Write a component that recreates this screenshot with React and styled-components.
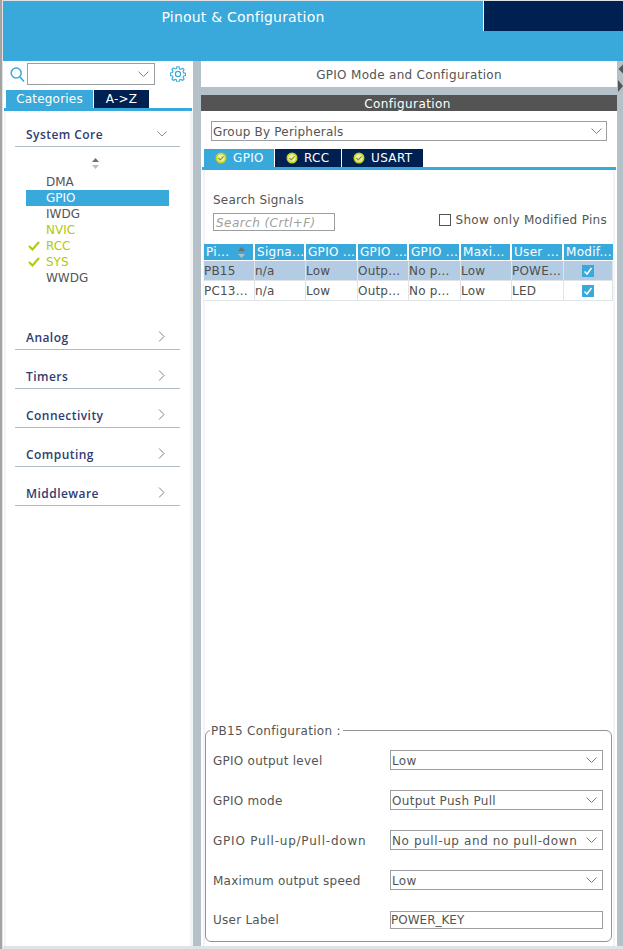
import React from "react";
import styled, { createGlobalStyle } from "styled-components";

const Global = createGlobalStyle`
  html, body { margin: 0; padding: 0; background: #fff; }
  body { font-family: "DejaVu Sans", sans-serif; font-size: 12px; color: #545554; }
  * { box-sizing: border-box; }
`;

const Frame = styled.div`
  width: 623px; height: 949px; overflow: hidden; background: #dfe3e6;
  padding: 1px 0 3px 1px; border-left: 2px solid #a3a3a3; display: flex; flex-direction: column;
`;
const Header = styled.header`
  height: 60px; flex: none; background: #39a9dc; display: flex; align-items: flex-start;
`;
const HeaderTab = styled.div`
  flex: 1; height: 31px; color: #fff; font-size: 14px; line-height: 32px; text-align: center; letter-spacing: 0.2px;
`;
const HeaderDark = styled.div`
  width: 140px; height: 30px; background: #002052; border-left: 1px solid #fff;
`;
const Body = styled.div`flex: 1; display: flex; min-height: 0; background: #b5c1c9;`;
const Left = styled.aside`
  width: 190px; flex: none; background: #fff; display: flex; flex-direction: column;
`;
const SearchRow = styled.div`
  height: 29px; padding: 2px 0 0 7px; display: flex; align-items: flex-start; flex: none;
`;
const ComboSmall = styled.div`
  width: 128px; height: 22px; margin-left: 2px; border: 1px solid #9c9fa2; background: #fff;
  display: flex; align-items: center; justify-content: flex-end; padding-right: 5px;
`;
const GearBox = styled.div`margin-left: 15px; margin-top: 3px; display: flex;`;
const TabsSmall = styled.div`display: flex; padding-left: 3px; gap: 1px; height: 18px; flex: none;`;
const SideTab = styled.div`
  height: 18px; width: ${p => p.$w}px; background: ${p => p.$active ? "#39a9dc" : "#002052"};
  color: #fff; font-size: 12px; line-height: 18px; text-align: center;
  letter-spacing: 0.2px; white-space: nowrap;
`;
const TabRule = styled.div`height: 3px; margin-left: 1px; width: 188px; background: #39a9dc; flex: none;`;
const LeftInner = styled.div`
  flex: 1; margin-left: 1px; border-left: 2px solid #f2f4f5; border-right: 3px solid #f2f4f5; padding: 0 0 0 9px;
`;
const Category = styled.div`
  width: 165px; height: ${p => p.$h}px; margin-top: ${p => p.$top}px; border-bottom: 1px solid #aebbc4;
  display: flex; align-items: flex-end; justify-content: space-between;
  padding: 0 ${p => p.$pr}px 3px 11px; color: #2f3d72; font-size: 12px; font-weight: 600;
  font-family: "Open Sans", "DejaVu Sans", sans-serif; letter-spacing: 0.45px;
`;
const Sort = styled.div`height: 14px; margin: 10px 0 0 76px; display: flex;`;
const Items = styled.ul`list-style: none; margin: 3px 0 0 11px; padding: 0; width: 143px;`;
const Item = styled.li`
  height: 16px; line-height: 16px; font-size: 12px; padding-left: 20px; position: relative;
  background: ${p => p.$sel ? "#39a9dc" : "transparent"};
  color: ${p => p.$sel ? "#fff" : p.$lime ? "#b4c70b" : "#545554"};
`;
const CheckMark = styled.svg`position: absolute; left: 2px; top: 3px;`;
const Gutter = styled.div`width: 8px; flex: none;`;
const Right = styled.main`width: 416px; flex: none; display: flex; flex-direction: column;`;
const ModeTitle = styled.div`
  height: 26px; flex: none; background: #fff; text-align: center; font-size: 12px; line-height: 28px; letter-spacing: 0.3px;
`;
const ConfigBar = styled.div`
  height: 16px; margin-top: 8px; flex: none; background: #535453; color: #fff; text-align: center; padding-right: 3px;
  font-size: 12px; line-height: 18px; letter-spacing: 0.4px;
`;
const ConfigBody = styled.div`flex: 1; background: #fff; display: flex; flex-direction: column; min-height: 0;`;
const Select = styled.div`
  width: ${p => p.$w}px; height: 20px; border: 1px solid #9c9fa2; background: #fff; margin-left: ${p => p.$ml || 0}px;
  display: flex; align-items: center; justify-content: space-between; padding: 1px ${p => p.$pr}px 0 1px; font-size: 12px;
  letter-spacing: ${p => p.$ls || 0.3}px; white-space: nowrap; flex: none;
`;
const GroupWrap = styled.div`padding-top: 10px; flex: none;`;
const PeriphTabs = styled.div`display: flex; gap: 1px; margin: 8px 0 0 3px; height: 18px;`;
const PeriphTab = styled.div`
  height: 18px; width: ${p => p.$w}px; background: ${p => p.$active ? "#39a9dc" : "#002052"}; color: #fff; font-size: 12px;
  display: flex; align-items: center; padding-left: 11px; gap: 6px; letter-spacing: 0.35px;
`;
const PeriphRule = styled.div`height: 3px; background: #39a9dc; margin: 0 1px 0 1px; flex: none;`;
const PeriphBody = styled.div`
  flex: 1; margin: 0 2px 0 2px; border-left: 2px solid #f2f4f5; border-right: 2px solid #f2f4f5; display: flex; flex-direction: column; min-height: 0;
`;
const SearchArea = styled.div`height: 74px; flex: none; padding: 23px 0 0 8px; display: flex; justify-content: space-between;`;
const SearchLeft = styled.div`display: flex; flex-direction: column;`;
const SearchLabel = styled.div`font-size: 12px; line-height: 14px; letter-spacing: 0.2px;`;
const SearchInput = styled.div`
  margin-top: 6px; width: 122px; height: 18px; border: 1px solid #9c9fa2; color: #a0a0a0; font-style: italic; font-size: 12px; line-height: 18px; padding-left: 2px; letter-spacing: 0.45px; white-space: nowrap;
`;
const ModifiedRow = styled.label`
  display: flex; align-items: center; gap: 5px; margin: 17px 6px 0 0; height: 20px; font-size: 12px; letter-spacing: 0.3px;
`;
const Box = styled.span`width: 12px; height: 12px; border: 1px solid #545554; background: #fff; display: block;`;
const Grid = styled.div`
  display: grid; grid-template-columns: 51px 51px 52px 51px 52px 51px 52px 49px; margin-left: -1px; width: 409px;
`;
const Th = styled.div`
  height: 16px; background: #39a9dc; color: #fff; font-size: 12px; line-height: 16px; padding-left: 2px; margin-right: ${p => p.$last ? 0 : 2}px;
  white-space: nowrap; overflow: hidden; display: flex; justify-content: space-between; align-items: center; padding-right: ${p => p.$pr || 0}px;
  letter-spacing: 0.3px;
`;
const Td = styled.div`
  height: 20px; margin-top: ${p => p.$first ? 1 : 0}px; background: ${p => p.$sel ? "#b4cce3" : "#fff"};
  border-right: 1px solid #dfe4e8; border-bottom: 1px solid #dfe4e8; font-size: 12px; line-height: 18px; padding-left: 0;
  white-space: nowrap; overflow: hidden; color: #4e4f4e; display: flex; align-items: center; letter-spacing: 0.2px;
  justify-content: ${p => p.$center ? "center" : "flex-start"};
`;
const Tick = styled.span`width: 12px; height: 12px; background: #39a9dc; display: flex; align-items: center; justify-content: center;`;
const Spacer = styled.div`flex: 1;`;
const Fieldset = styled.fieldset`
  margin: 0 1px 4px 0; padding: 3px 8px 0 7px; height: 219px; border: 1px solid #8f9499; border-radius: 6px; min-width: 0;
  display: flex; flex-direction: column; flex: none;
`;
const Legend = styled.legend`padding: 1px 2px 0 1px; height: 14px; margin-left: -3px; font-size: 12px; line-height: 14px; letter-spacing: 0.3px;`;
const FormRow = styled.div`
  height: 40px; display: flex; align-items: center; justify-content: space-between; flex: none; font-size: 12px;
`;
const FormLabel = styled.span`letter-spacing: ${p => p.$ls || 0.25}px; white-space: nowrap; padding-top: ${p => p.$pt ?? 1}px;`;
const TextValue = styled.div`
  width: 213px; height: 18px; border: 1px solid #9c9fa2; font-size: 12px; line-height: 16px; padding-left: 0; color: #545554;
`;
const RightStrip = styled.div`flex: 1; position: relative; background: #b5c1c9;`;
const Handle = styled.svg`position: absolute; right: 0; top: 0;`;

const Chevron = ({ size = 11, color = "#7b8288", up = 0 }) => (
  <svg width={size} height={size * 0.6} viewBox="0 0 10 6" fill="none" style={{ marginBottom: up, flex: "none" }}>
    <path d="M.5.5 5 5 9.5.5" stroke={color} strokeWidth=".9" />
  </svg>
);
const ChevronRight = () => (
  <svg width="7" height="11" viewBox="0 0 7 11" fill="none" style={{ marginBottom: 4, flex: "none" }}>
    <path d="M1 .5 6 5.5 1 10.5" stroke="#7b8288" strokeWidth="1" />
  </svg>
);
const OkBadge = () => (
  <svg width="12" height="12" viewBox="0 0 12 12" style={{ flex: "none" }}>
    <circle cx="6" cy="6" r="5.5" fill="#c4d21c" />
    <circle cx="6" cy="6" r="3.8" fill="#e9efb0" />
    <path d="M3.4 6 5.2 7.8 8.6 4.4" fill="none" stroke="#8f9c10" strokeWidth="1.2" />
  </svg>
);
const TickIcon = () => (
  <svg width="10" height="10" viewBox="0 0 10 10"><path d="M1.5 5.5 4 8 8.5 2" fill="none" stroke="#fff" strokeWidth="1.5" /></svg>
);
const SortIcon = () => (
  <svg width="9" height="13" viewBox="0 0 9 13" style={{ flex: "none" }}>
    <path d="M4.5 1 8 5H1z" fill="#6a7074" /><path d="M4.5 12 8 8H1z" fill="#b9bec2" />
  </svg>
);
const ListCheck = () => (
  <CheckMark width="12" height="10" viewBox="0 0 12 10">
    <path d="M1 5 4.5 8.5 11 1" fill="none" stroke="#b4c70b" strokeWidth="2" />
  </CheckMark>
);

const rows = [
  ["PB15", "n/a", "Low", "Outp...", "No p...", "Low", "POWE..."],
  ["PC13...", "n/a", "Low", "Outp...", "No p...", "Low", "LED"],
];
const heads = ["Signa...", "GPIO ...", "GPIO ...", "GPIO ...", "Maxi...", "User ...", "Modif..."];
const fields = [
  ["GPIO output level", "Low"],
  ["GPIO mode", "Output Push Pull"],
  ["GPIO Pull-up/Pull-down", "No pull-up and no pull-down", 0.78, 0.6],
  ["Maximum output speed", "Low"],
];

export default function App() {
  return (
    <Frame>
      <Global />
      <Header>
        <HeaderTab>Pinout &amp; Configuration</HeaderTab>
        <HeaderDark />
      </Header>
      <Body>
        <Left>
          <SearchRow>
            <svg width="15" height="17" viewBox="0 0 15 17" fill="none" style={{ marginTop: 3, flex: "none" }}>
              <circle cx="6.2" cy="7" r="5" stroke="#39a9dc" strokeWidth="1.5" />
              <path d="M10 11 14 15.5" stroke="#39a9dc" strokeWidth="1.6" />
            </svg>
            <ComboSmall><Chevron /></ComboSmall>
            <GearBox>
              <svg width="16" height="16" viewBox="0 0 16 16" fill="none" stroke="#39a9dc">
                <circle cx="8" cy="8" r="2.6" strokeWidth="1.2" />
                <path strokeWidth="1.1" d="M6.9.8h2.2l.4 2 1.4.6 1.7-1.1 1.5 1.5-1.1 1.7.6 1.4 2 .4v2.2l-2 .4-.6 1.4 1.1 1.7-1.5 1.5-1.7-1.1-1.4.6-.4 2H6.9l-.4-2-1.4-.6-1.7 1.1-1.5-1.5 1.1-1.7-.6-1.4-2-.4V6.9l2-.4.6-1.4-1.1-1.7 1.5-1.5 1.7 1.1 1.4-.6z" />
              </svg>
            </GearBox>
          </SearchRow>
          <TabsSmall>
            <SideTab $active $w={87}>Categories</SideTab>
            <SideTab $w={55}>A-&gt;Z</SideTab>
          </TabsSmall>
          <TabRule />
          <LeftInner>
            <Category $h={36} $top={0} $pr={13}>System Core <Chevron size={10} up={6} /></Category>
            <Sort><SortIcon /></Sort>
            <Items>
              <Item>DMA</Item>
              <Item $sel>GPIO</Item>
              <Item>IWDG</Item>
              <Item $lime>NVIC</Item>
              <Item $lime><ListCheck />RCC</Item>
              <Item $lime><ListCheck />SYS</Item>
              <Item>WWDG</Item>
            </Items>
            <Category $h={39} $top={25} $pr={15}>Analog <ChevronRight /></Category>
            <Category $h={39} $top={0} $pr={15}>Timers <ChevronRight /></Category>
            <Category $h={39} $top={0} $pr={15}>Connectivity <ChevronRight /></Category>
            <Category $h={39} $top={0} $pr={15}>Computing <ChevronRight /></Category>
            <Category $h={39} $top={0} $pr={15}>Middleware <ChevronRight /></Category>
          </LeftInner>
        </Left>
        <Gutter />
        <Right>
          <ModeTitle>GPIO Mode and Configuration</ModeTitle>
          <ConfigBar>Configuration</ConfigBar>
          <ConfigBody>
            <GroupWrap>
              <Select $w={396} $ml={10} $pr={4} $ls={0.2}>Group By Peripherals <Chevron /></Select>
              <PeriphTabs>
                <PeriphTab $active $w={70}><OkBadge />GPIO</PeriphTab>
                <PeriphTab $w={66}><OkBadge />RCC</PeriphTab>
                <PeriphTab $w={81}><OkBadge />USART</PeriphTab>
              </PeriphTabs>
              <PeriphRule />
            </GroupWrap>
            <PeriphBody>
              <SearchArea>
                <SearchLeft>
                  <SearchLabel>Search Signals</SearchLabel>
                  <SearchInput>Search (Crtl+F)</SearchInput>
                </SearchLeft>
                <ModifiedRow><Box />Show only Modified Pins</ModifiedRow>
              </SearchArea>
              <Grid>
                <Th $pr={7}>Pi... <SortIcon /></Th>
                {heads.map((h, i) => <Th key={i} $last={i === heads.length - 1}>{h}</Th>)}
                {rows.map((r, ri) => (
                  <React.Fragment key={ri}>
                    {r.map((c, ci) => <Td key={ci} $first={ri === 0} $sel={ri === 0}>{c}</Td>)}
                    <Td $first={ri === 0} $sel={ri === 0} $center><Tick><TickIcon /></Tick></Td>
                  </React.Fragment>
                ))}
              </Grid>
              <Spacer />
              <Fieldset>
                <Legend>PB15 Configuration :</Legend>
                {fields.map(([l, v, labelLs, valueLs]) => (
                  <FormRow key={l}>
                    <FormLabel $ls={labelLs}>{l}</FormLabel>
                    <Select $w={213} $pr={5} $ls={valueLs}>{v} <Chevron /></Select>
                  </FormRow>
                ))}
                <FormRow><FormLabel $pt={0}>User Label</FormLabel><TextValue>POWER_KEY</TextValue></FormRow>
              </Fieldset>
            </PeriphBody>
          </ConfigBody>
        </Right>
        <RightStrip>
          <Handle width="6" height="32" viewBox="0 0 6 32">
            <path d="M6 3.5 1.5 8 6 12.5z" fill="#545554" /><path d="M1 19 6 25 1 31z" fill="#545554" />
          </Handle>
        </RightStrip>
      </Body>
    </Frame>
  );
}
